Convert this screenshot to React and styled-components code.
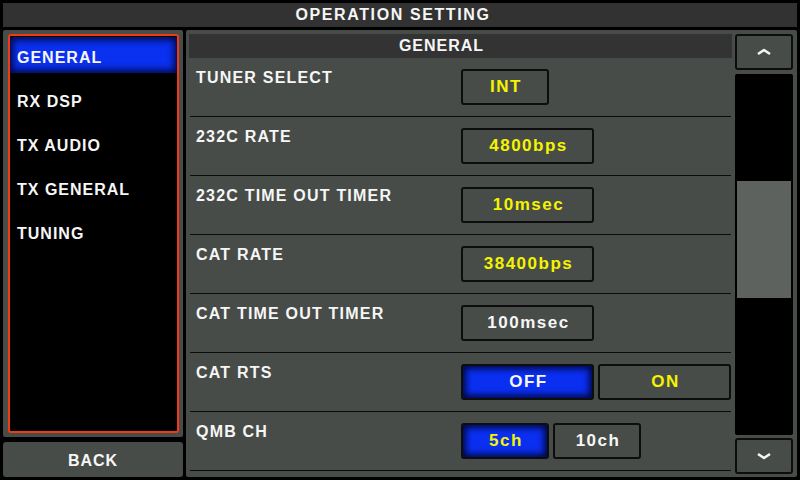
import styled, { createGlobalStyle } from 'styled-components';

const GlobalStyle = createGlobalStyle`
  html, body {
    margin: 0;
    padding: 0;
    background: #000;
  }
  * {
    box-sizing: border-box;
  }
`;

const menuItems = ['GENERAL', 'RX DSP', 'TX AUDIO', 'TX GENERAL', 'TUNING'];

const settings = [
  { label: 'TUNER SELECT', options: [{ text: 'INT', tone: 'yellow', size: 'narrow' }] },
  { label: '232C RATE', options: [{ text: '4800bps', tone: 'yellow', size: 'wide' }] },
  { label: '232C TIME OUT TIMER', options: [{ text: '10msec', tone: 'yellow', size: 'wide' }] },
  { label: 'CAT RATE', options: [{ text: '38400bps', tone: 'yellow', size: 'wide' }] },
  { label: 'CAT TIME OUT TIMER', options: [{ text: '100msec', tone: 'white', size: 'wide' }] },
  {
    label: 'CAT RTS',
    options: [
      { text: 'OFF', tone: 'white', size: 'wide', active: true },
      { text: 'ON', tone: 'yellow', size: 'wide' },
    ],
  },
  {
    label: 'QMB CH',
    options: [
      { text: '5ch', tone: 'yellow', size: 'narrow', active: true },
      { text: '10ch', tone: 'white', size: 'narrow' },
    ],
  },
];

const Chevron = ({ down }) => (
  <svg width="16" height="8" viewBox="0 0 16 8">
    <polyline
      points={down ? '2,2 8,6 14,2' : '2,6 8,2 14,6'}
      fill="none"
      stroke="#f4f4f4"
      strokeWidth="2.6"
      strokeLinejoin="round"
    />
  </svg>
);

const App = () => {
  return (
    <Screen>
      <GlobalStyle />
      <TitleBar>OPERATION SETTING</TitleBar>

      <Sidebar>
        <MenuPanel>
          <MenuFrame>
            {menuItems.map((item, i) => (
              <MenuItem key={item} $active={i === 0}>
                {item}
              </MenuItem>
            ))}
          </MenuFrame>
        </MenuPanel>
        <BackButton>BACK</BackButton>
      </Sidebar>

      <MainPanel>
        <Content>
          <SectionHeader>GENERAL</SectionHeader>
          {settings.map((row) => (
            <SettingRow key={row.label}>
              <Label>{row.label}</Label>
              <Options>
                {row.options.map((opt) => (
                  <ValueBox
                    key={opt.text}
                    $size={opt.size}
                    $tone={opt.tone}
                    $active={opt.active}
                  >
                    {opt.text}
                  </ValueBox>
                ))}
              </Options>
            </SettingRow>
          ))}
        </Content>

        <ScrollColumn>
          <ScrollButton>
            <Chevron />
          </ScrollButton>
          <Track>
            <Thumb style={{ marginTop: 107, height: 117 }} />
          </Track>
          <ScrollButton>
            <Chevron down />
          </ScrollButton>
        </ScrollColumn>
      </MainPanel>
    </Screen>
  );
};

const Screen = styled.div`
  width: 800px;
  height: 480px;
  padding: 3px;
  background: #000;
  display: grid;
  grid-template-columns: 180px 1fr;
  grid-template-rows: 24px 1fr;
  column-gap: 3px;
  row-gap: 3px;
  font-family: "Liberation Sans", Arial, sans-serif;
  font-weight: 700;
  color: #f6f6f6;
  overflow: hidden;
`;

const TitleBar = styled.div`
  grid-column: 1 / -1;
  background: #323232;
  display: flex;
  align-items: center;
  justify-content: center;
  font-size: 16px;
  letter-spacing: 1.6px;
  padding-right: 14px;
`;

const Sidebar = styled.div`
  display: flex;
  flex-direction: column;
  gap: 5px;
`;

const MenuPanel = styled.div`
  height: 407px;
  background: #484c49;
  border-radius: 2px;
  padding: 4px 4px 4px 5px;
`;

const MenuFrame = styled.div`
  height: 100%;
  background: #000;
  border: 2px solid #f23a12;
  border-radius: 3px;
  padding-top: 1px;
`;

const MenuItem = styled.div`
  height: 36px;
  margin-bottom: 8px;
  padding: 5px 0 0 7px;
  display: flex;
  align-items: center;
  font-size: 16px;
  letter-spacing: 1px;
  background: ${(p) => (p.$active ? '#0a30f0' : 'transparent')};
  box-shadow: ${(p) => (p.$active ? 'inset 0 0 7px 3px rgba(0, 6, 60, 0.95)' : 'none')};
`;

const BackButton = styled.div`
  flex: 1;
  background: #484c49;
  border-radius: 3px;
  display: flex;
  align-items: center;
  justify-content: center;
  padding-top: 2px;
  font-size: 16px;
  letter-spacing: 1px;
`;

const MainPanel = styled.div`
  background: #484c49;
  border-radius: 2px;
  padding: 4px 4px 3px 3px;
  display: flex;
  gap: 3px;
`;

const Content = styled.div`
  width: 543px;
  display: flex;
  flex-direction: column;
`;

const SectionHeader = styled.div`
  height: 24px;
  background: #333333;
  display: flex;
  align-items: center;
  justify-content: center;
  padding-right: 38px;
  font-size: 16px;
  letter-spacing: 1px;
`;

const SettingRow = styled.div`
  height: 59px;
  margin: 0 1px;
  border-bottom: 1px solid #0c0c0c;
  display: grid;
  grid-template-columns: 271px 1fr;
  align-items: center;
`;

const Label = styled.div`
  align-self: start;
  padding: 12px 0 0 6px;
  font-size: 16px;
  line-height: 16px;
  letter-spacing: 1.2px;
  white-space: nowrap;
`;

const Options = styled.div`
  display: flex;
  gap: 4px;
`;

const ValueBox = styled.div`
  width: ${(p) => (p.$size === 'wide' ? '133px' : '88px')};
  height: 36px;
  border: 2px solid #0d0d0d;
  border-radius: 3px;
  display: flex;
  align-items: center;
  justify-content: center;
  font-size: 17px;
  letter-spacing: 1.5px;
  padding-left: 2px;
  color: ${(p) => (p.$tone === 'yellow' ? '#f4f400' : '#f6f6f6')};
  background: ${(p) => (p.$active ? '#0a2ff0' : 'transparent')};
  box-shadow: ${(p) => (p.$active ? 'inset 0 0 6px 3px rgba(0, 6, 60, 0.95)' : 'none')};
`;

const ScrollColumn = styled.div`
  width: 58px;
  display: flex;
  flex-direction: column;
  gap: 4px;
`;

const ScrollButton = styled.div`
  height: 36px;
  border: 2px solid #0d0d0d;
  border-radius: 3px;
  display: flex;
  align-items: center;
  justify-content: center;
`;

const Track = styled.div`
  flex: 1;
  background: #000;
  border-radius: 2px;
  padding: 0 2px;
  margin-bottom: -1px;
`;

const Thumb = styled.div`
  background: #5d625e;
`;

export default App;
